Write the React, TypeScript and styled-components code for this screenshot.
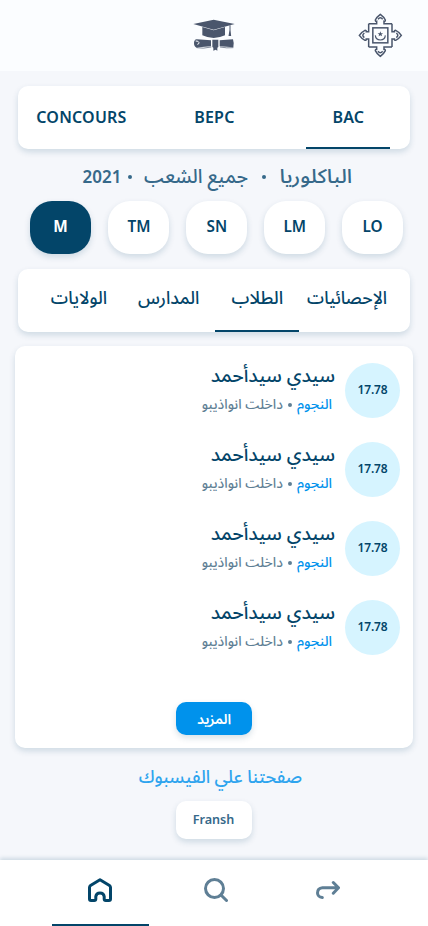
import React from 'react';
import styled, { createGlobalStyle } from 'styled-components';

const Global = createGlobalStyle`
  * { box-sizing: border-box; }
  body { margin: 0; background: #f5f7fb; }
`;

const navy = '#034569';
const slate = '#5f7f95';
const steel = '#36698a';
const arabic = '"Noto Sans Arabic", "Noto Sans", sans-serif';
const latin = '"Noto Sans", sans-serif';
const shadow = '0 3px 6px rgba(3, 69, 105, 0.16)';

const Page = styled.div`
  width: 428px;
  height: 926px;
  display: flex;
  flex-direction: column;
  background: #f5f7fb;
  color: ${navy};
  overflow: hidden;
`;

const Header = styled.header`
  height: 71px;
  flex: none;
  display: grid;
  grid-template-columns: 180px 70px 100px 60px;
  margin-bottom: 15px;
  background: #fbfdff;
  .emblem { grid-column: 4; margin-top: 5px; }
  .cap { grid-column: 2; }
`;

const TabCard = styled.nav<{ $columns: string }>`
  height: 63px;
  flex: none;
  margin: 0 18.4px;
  display: grid;
  grid-template-columns: ${p => p.$columns};
  background: #fff;
  border-radius: 10px;
  box-shadow: ${shadow};
`;

const Tab = styled.a<{ $active?: boolean; $drop?: number }>`
  display: flex;
  align-items: center;
  justify-content: center;
  border-bottom: 2px solid ${p => (p.$active ? navy : 'transparent')};
  padding-top: ${p => p.$drop ?? 0}px;
  padding-bottom: ${p => (p.$drop ? 0 : 4)}px;
`;

const Text = styled.span<{ $size: number; $weight?: number; $color?: string; $latin?: boolean; $stretch?: number; $track?: number }>`
  display: inline-block;
  font-family: ${p => (p.$latin ? latin : arabic)};
  font-size: ${p => p.$size}px;
  font-weight: ${p => p.$weight ?? 500};
  line-height: 24px;
  letter-spacing: ${p => p.$track ?? 0}px;
  color: ${p => p.$color ?? navy};
  white-space: nowrap;
  transform: scaleX(${p => p.$stretch ?? 1});
`;

const Subtitle = styled.div`
  height: 52px;
  flex: none;
  display: grid;
  grid-template-columns: 40px 16px 116px 20px 84px;
  justify-items: center;
  align-items: center;
  padding: 4px 0 0 82px;
`;

const Dot = styled.i<{ $size: number; $color: string }>`
  width: ${p => p.$size}px;
  height: ${p => p.$size}px;
  flex: none;
  border-radius: 50%;
  background: ${p => p.$color};
`;

const Pills = styled.div`
  height: 53px;
  flex: none;
  display: flex;
  justify-content: space-between;
  margin: 0 25px 15px 30px;
`;

const Pill = styled.button<{ $active?: boolean }>`
  width: 61px;
  border: 0;
  padding: 0 0 4px 1px;
  border-radius: 22px;
  background: ${p => (p.$active ? navy : '#fff')};
  box-shadow: ${shadow};
`;

const List = styled.section`
  height: 402px;
  flex: none;
  margin: 14px 15px 0;
  padding: 17px 13px 0;
  display: flex;
  flex-direction: column;
  background: #fff;
  border-radius: 10px;
  box-shadow: ${shadow};
`;

const Student = styled.article`
  height: 79px;
  display: flex;
  flex-direction: row-reverse;
  gap: 10px;
`;

const Score = styled.div`
  width: 55px;
  height: 55px;
  padding-bottom: 2px;
  border-radius: 50%;
  background: #d6f4ff;
  display: flex;
  align-items: center;
  justify-content: center;
`;

const Details = styled.div`
  display: flex;
  flex-direction: column;
  align-items: flex-end;
  gap: 5px;
  padding-top: 1px;
`;

const Meta = styled.div`
  display: flex;
  flex-direction: row-reverse;
  align-items: center;
  gap: 5px;
  padding-right: 3px;
`;

const Button = styled.button<{ $primary?: boolean }>`
  width: 76px;
  height: ${p => (p.$primary ? 33 : 38)}px;
  flex: none;
  align-self: center;
  margin-top: ${p => (p.$primary ? 23 : 10)}px;
  padding: ${p => (p.$primary ? '2px 0 0' : '0 1px 2px 0')};
  border: 0;
  border-radius: 10px;
  background: ${p => (p.$primary ? '#0092ec' : '#fff')};
  box-shadow: ${shadow};
`;

const Facebook = styled.a`
  height: 43px;
  flex: none;
  display: flex;
  align-items: flex-end;
  justify-content: center;
  padding: 0 0 2px 12px;
`;

const BottomBar = styled.footer`
  height: 66px;
  flex: none;
  margin-top: auto;
  display: grid;
  grid-template-columns: 97px 134px 90px;
  padding-left: 52px;
  background: #fff;
  box-shadow: 0 -2px 4px rgba(3, 69, 105, 0.16);
`;

const NavItem = styled.a<{ $active?: boolean }>`
  display: flex;
  justify-content: center;
  align-items: center;
  padding: 0 ${p => (p.$active ? 1 : 0)}px 4px 0;
  border-bottom: 2px solid ${p => (p.$active ? navy : 'transparent')};
`;

const CapLogo = () => (
  <svg className="cap" width="70" height="70" viewBox="0 0 210 210" fill="#4a566c">
    <path d="M40 72 L101 59 L164 72 L101 89Z" />
    <path d="M67 81 L101 91 L135 81 V106 Q122 113 101 114 Q80 113 67 106Z" />
    <path d="M148.5 76h3v14l2 18h-8l3-18z" />
    <path d="M50 118 L93 121 V139 L56 142 L50 143 Q42 140 42 130 Q42 119 50 118Z" />
    <path d="M119 121 L159 118 Q163 130 160 142 L119 139Z" />
    <path d="M97 119h18v22l-3 2v9l-5-3-7 3v-9l-3-2z" />
    <path d="M47 123q8-1 10 5 0 5-5 5" fill="none" stroke="#fbfdff" strokeWidth="3" />
    <path d="M50 143q18 4 44-2M120 141q20 4 40 2" fill="none" stroke="#4a566c" strokeWidth="2" />
  </svg>
);

const side =
  'M56 56H80V49Q76 50 76 45Q80 36 91 28Q102 36 106 45Q106 50 102 49V56H126M84 43Q91 34 98 43';

const Emblem = () => (
  <svg className="emblem" width="60" height="60" viewBox="0 0 180 180" fill="none" stroke="#4a566c" strokeWidth="4.5">
    {[0, 90, 180, 270].map(a => <path key={a} d={side} transform={`rotate(${a} 91 91)`} />)}
    <rect x="68.5" y="68.5" width="45" height="45" />
    <path d="M76 91Q77 104 91 105Q105 104 106 91" strokeWidth="3.5" />
    <path d="M91 79l2.2 5.5h6l-4.7 3.7 1.8 5.6-5.3-3.4-5.3 3.4 1.8-5.6-4.7-3.7h6z" fill="#4a566c" stroke="none" />
  </svg>
);

const HomeIcon = () => (
  <svg width="24" height="24" viewBox="0 0 24 24" fill="none" stroke={navy} strokeWidth="3" strokeLinejoin="round">
    <path d="M12 1.7L2.5 7.5Q1.5 8.2 1.5 9.5V21Q1.5 22.5 3 22.5H6.2Q7.8 22.5 7.8 21V18.5Q8.3 15 12 15T16.2 18.5V21Q16.2 22.5 17.8 22.5H21Q22.5 22.5 22.5 21V9.5Q22.5 8.2 21.5 7.5Z" />
  </svg>
);

const SearchIcon = () => (
  <svg width="24" height="24" viewBox="0 0 24 24" fill="none" stroke={slate} strokeWidth="3" strokeLinecap="round">
    <circle cx="10.5" cy="10.5" r="9" />
    <path d="M17 17l5.5 5.5" />
  </svg>
);

const ForwardIcon = () => (
  <svg width="24" height="24" viewBox="0 0 24 24" fill="none" stroke={slate} strokeWidth="3" strokeLinecap="round" strokeLinejoin="round">
    <path d="M17.3 4.5L22.5 9.8L17.3 15.2M22 9.8H6.5Q1.5 10.3 1.5 15Q1.7 19 6.3 19.5" />
  </svg>
);

export default function App() {
  return (
    <Page>
      <Global />
      <Header><CapLogo /><Emblem /></Header>
      <TabCard $columns="21px 84px 49px 84px 50px 84px">
        <span />
        <Tab $drop={1}><Text $latin $size={16} $weight={600} $track={0.2}>CONCOURS</Text></Tab><span />
        <Tab $drop={1}><Text $latin $size={16} $weight={600} $track={0.2}>BEPC</Text></Tab><span />
        <Tab $active $drop={1}><Text $latin $size={16} $weight={600} $track={0.2}>BAC</Text></Tab>
      </TabCard>
      <Subtitle>
        <Text $latin $size={17} $weight={600} $color={steel}>2021</Text>
        <Dot $size={4} $color={steel} />
        <Text $size={19.5} $color={steel} $stretch={0.98}>جميع الشعب</Text>
        <Dot $size={4} $color={steel} />
        <Text $size={19.5} $color={steel} $stretch={1.11}>الباكلوريا</Text>
      </Subtitle>
      <Pills>
        {['M', 'TM', 'SN', 'LM', 'LO'].map((t, i) => (
          <Pill key={t} $active={i === 0}><Text $latin $size={16} $weight={i ? 600 : 700} $color={i ? navy : '#fff'} $stretch={0.96}>{t}</Text></Pill>
        ))}
      </Pills>
      <TabCard $columns="19px 84px 5px 84px 5px 84px 6px 84px">
        <span />
        <Tab><Text $size={18} $stretch={0.97}>الولايات</Text></Tab><span />
        <Tab><Text $size={18} $stretch={0.97}>المدارس</Text></Tab><span />
        <Tab $active><Text $size={18}>الطلاب</Text></Tab><span />
        <Tab><Text $size={18} $stretch={0.95}>الإحصائيات</Text></Tab>
      </TabCard>
      <List>
        {[0, 1, 2, 3].map(i => (
          <Student key={i}>
            <Score><Text $latin $size={12} $weight={600} $track={-0.2}>17.78</Text></Score>
            <Details>
              <Text $size={19}>سيدي سيدأحمد</Text>
              <Meta>
                <Text $size={14} $color="#0092ec">النجوم</Text>
                <Dot $size={4} $color={slate} />
                <Text $size={13.7} $color={slate}>داخلت انواذيبو</Text>
              </Meta>
            </Details>
          </Student>
        ))}
        <Button $primary><Text $size={14} $weight={600} $color="#fff">المزيد</Text></Button>
      </List>
      <Facebook><Text $size={18} $color="#2ea4ee" $stretch={0.98}>صفحتنا علي الفيسبوك</Text></Facebook>
      <Button><Text $latin $size={13} $weight={600} $color={steel} $stretch={0.97}>Fransh</Text></Button>
      <BottomBar>
        <NavItem $active><HomeIcon /></NavItem>
        <NavItem><SearchIcon /></NavItem>
        <NavItem><ForwardIcon /></NavItem>
      </BottomBar>
    </Page>
  );
}
